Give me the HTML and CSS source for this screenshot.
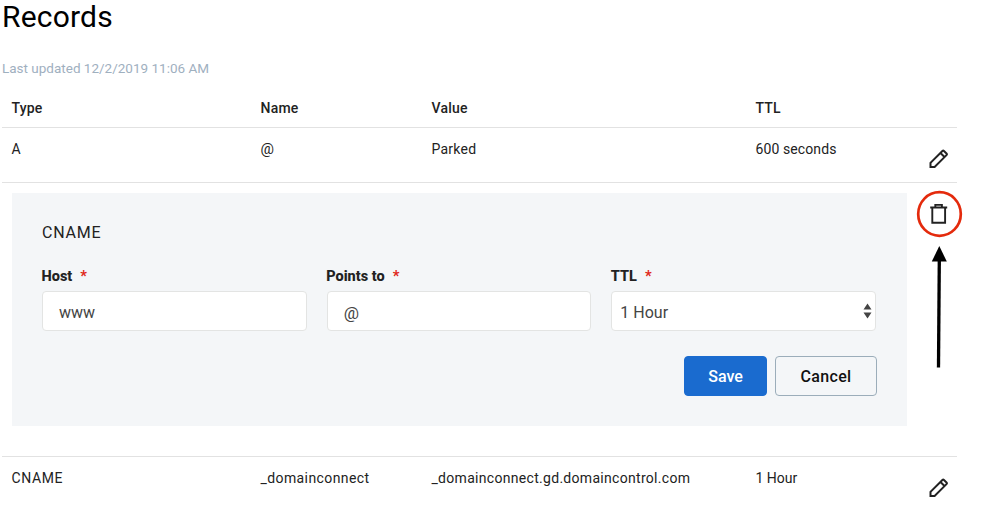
FILE: index.html
```html
<!DOCTYPE html>
<html lang="en">
<head>
<meta charset="utf-8">
<title>Records</title>
<link rel="stylesheet" href="styles.css">
</head>
<body>
<svg class="defs" aria-hidden="true">
  <symbol id="pencil" viewBox="0 0 20 20">
    <path d="M1.500 18v-4.100L13.400 2a1.100 1.100 0 0 1 1.550 0l2.550 2.550a1.100 1.100 0 0 1 0 1.550L5.600 18zM11.500 4l4 4" fill="none" stroke="currentColor" stroke-width="2"/>
  </symbol>
</svg>
<main class="page">
  <h1>Records</h1>
  <p class="updated">Last updated 12/2/2019 11:06 AM</p>
  <section class="table">
    <div class="row head">
      <span>Type</span><span>Name</span><span>Value</span><span>TTL</span>
    </div>
    <div class="row first">
      <span>A</span><span class="at">@</span><span>Parked</span><span class="secs">600 seconds</span>
      <svg class="edit"><use href="#pencil"/></svg>
    </div>
    <div class="row editing">
      <form class="panel">
        <h2>CNAME</h2>
        <div class="fields">
          <div class="field"><div class="label">Host<i>*</i></div><div class="input">www</div></div>
          <div class="field"><div class="label">Points to<i>*</i></div><div class="input at">@</div></div>
          <div class="field"><div class="label">TTL<i>*</i></div>
            <div class="input select"><span>1 Hour</span>
              <svg width="9" height="16" viewBox="0 0 9 16"><path d="M.5 6.500h8L4.500 .5zM.5 9.500h8l-4 6z" fill="#444"/></svg>
            </div>
          </div>
        </div>
        <div class="actions">
          <button class="save" type="button">Save</button>
          <button class="cancel" type="button">Cancel</button>
        </div>
      </form>
      <svg class="callout" width="48" height="182" viewBox="0 0 48 182">
        <ellipse cx="24.500" cy="24" rx="21.300" ry="21.800" fill="#fff" stroke="#e42a0c" stroke-width="2.700"/>
        <path d="M17.300 17.500h12.800v15.200H17.300zM15.200 17.500h17M20.300 17.500v-2.600h6.600v2.600" fill="none" stroke="#222" stroke-width="1.900"/>
        <path d="M24.300 56l7.500 15.500h-15z"/>
        <path d="M24.300 70l-.8 107.500" stroke="#000" stroke-width="3.300"/>
      </svg>
    </div>
    <div class="row last">
      <span class="type">CNAME</span><span class="name">_domainconnect</span><span class="value">_domainconnect.gd.domaincontrol.com</span><span class="hour">1 Hour</span>
      <svg class="edit"><use href="#pencil"/></svg>
    </div>
  </section>
</main>
</body>
</html>
```
FILE: styles.css
```css
* { box-sizing: border-box; }
body {
  margin: 0;
  background: #fff;
  color: #222;
  font: 14px/20px Roboto, "Liberation Sans", sans-serif;
  overflow: hidden;
}
.defs { display: none; }
.page { width: 955px; margin-left: 2px; }
h1 {
  margin: 0;
  font-size: 30px;
  font-weight: 400;
  line-height: 34px;
  letter-spacing: .2px;
  color: #000;
}
.updated {
  margin: 24px 0 10px;
  font-size: 13.500px;
  color: #9fb0bf;
  letter-spacing: 0;
}
.row {
  display: grid;
  grid-template-columns: 249px 171px 324px 173px 20px;
  align-items: start;
  padding: 11px 0 0 9.500px;
  border-bottom: 1px solid #e2e2e2;
}
.head { height: 40px; padding-top: 10px; font-weight: 500; letter-spacing: .2px; }
.first { height: 55px; letter-spacing: .25px; }
.first .at { font-size: 15px; }
.secs { letter-spacing: .1px; }
.edit { width: 20px; height: 20px; margin-top: 10px; }
.row.editing {
  display: flex;
  gap: 8px;
  height: 274px;
  padding: 10px 0 0 10px;
}
.callout { margin-top: -3px; margin-right: -8px; flex: none; }
.panel {
  flex: none;
  width: 895px;
  height: 233px;
  padding: 30px 30px 0;
  background: #f4f6f8;
}
h2 {
  margin: 0 0 24px;
  font-size: 16px;
  font-weight: 400;
  line-height: 20px;
  letter-spacing: .8px;
}
.fields {
  display: grid;
  grid-template-columns: repeat(3, 1fr);
  gap: 20px;
  width: 834px;
}
.label { margin: 0 0 4px -.5px; font-weight: 800; font-size: 14.500px; }
.label i { margin-left: 8px; font-style: normal; color: #e0281a; }
.input {
  height: 40px;
  padding: 2px 16px 0;
  border: 1px solid #e3e4e3;
  border-radius: 4px;
  background: #fff;
  color: #444;
  font-size: 16px;
  line-height: 38px;
}
.input.at { font-size: 17px; }
.select {
  display: flex;
  align-items: center;
  justify-content: space-between;
  padding: 0 3px 0 8px;
}
.select span { padding-top: 3px; }
.actions {
  display: flex;
  justify-content: flex-end;
  gap: 8px;
  margin-top: 25px;
}
button {
  height: 40px;
  padding: 2px 0 0;
  border: 1px solid #1a6bcf;
  border-radius: 4px;
  font: 500 16px/36px Roboto, "Liberation Sans", sans-serif;
}
.save { width: 83px; background: #1a6bcf; color: #fff; }
.cancel { width: 102px; border-color: #9badba; background: #f4f6f8; color: #111; letter-spacing: .3px; }
.last { height: 55px; border: 0; letter-spacing: .3px; }
.type { letter-spacing: .6px; }
.name { letter-spacing: .4px; }
.hour { letter-spacing: 0; }
```
